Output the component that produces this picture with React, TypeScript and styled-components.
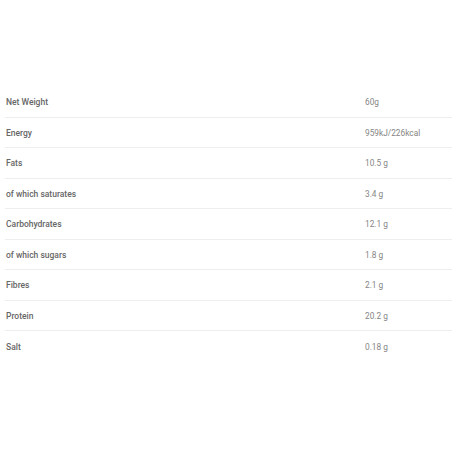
import React from "react";
import styled, { createGlobalStyle } from "styled-components";

const GlobalStyle = createGlobalStyle`
  body {
    margin: 0;
    background: #ffffff;
    font-family: Roboto, "Liberation Sans", sans-serif;
  }
`;

const Page = styled.div`
  padding: 87px 0 0 5px;
`;

const Table = styled.div`
  display: flex;
  flex-direction: column;
  width: 447px;
`;

const Row = styled.div`
  display: grid;
  grid-template-columns: 360px 1fr;
  align-items: center;
  height: 30.5px;
  padding-top: 1px;
  box-sizing: border-box;
  border-bottom: 1px solid #eeeeee;
  &:last-child {
    border-bottom: none;
  }
`;

const Label = styled.span`
  padding-left: 1px;
  font-size: 8.5px;
  font-weight: 500;
  color: #666666;
`;

const Value = styled.span`
  font-size: 8.3px;
  font-weight: 400;
  color: #858585;
`;

const rows: [string, string][] = [
  ["Net Weight", "60g"],
  ["Energy", "959kJ/226kcal"],
  ["Fats", "10.5 g"],
  ["of which saturates", "3.4 g"],
  ["Carbohydrates", "12.1 g"],
  ["of which sugars", "1.8 g"],
  ["Fibres", "2.1 g"],
  ["Protein", "20.2 g"],
  ["Salt", "0.18 g"],
];

const App: React.FC = () => (
  <>
    <GlobalStyle />
    <Page>
      <Table>
        {rows.map(([label, value]) => (
          <Row key={label}>
            <Label>{label}</Label>
            <Value>{value}</Value>
          </Row>
        ))}
      </Table>
    </Page>
  </>
);

export default App;
